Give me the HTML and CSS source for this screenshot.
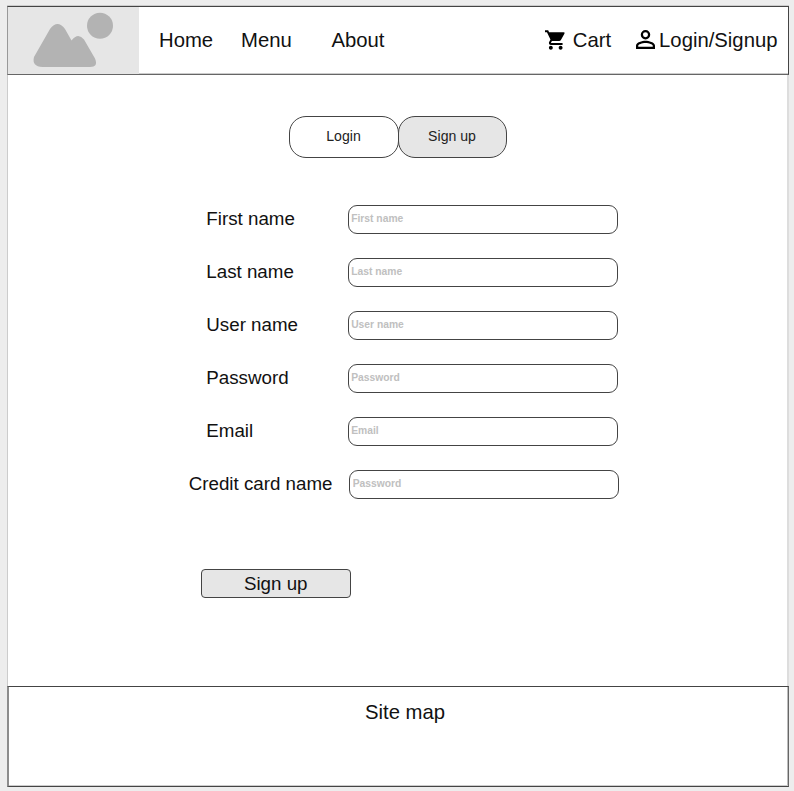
FILE: index.html
```
<!DOCTYPE html>
<html lang="en">
<head>
<meta charset="utf-8">
<title>Sign up</title>
<link rel="stylesheet" href="styles.css">
</head>
<body>
<div class="page">
  <header class="header">
    <div class="logo">
      <svg width="131" height="67" viewBox="0 0 131 67" fill="#b3b3b3">
        <circle cx="92" cy="18.8" r="13"/>
        <path d="M42 22Q49.500 12 57 22L63.500 33.500Q70 25 76 32.500L87 51.500Q90.500 60 82 60H34.500Q23.500 59.500 26 50Z"/>
      </svg>
    </div>
    <nav class="nav">
      <a class="home">Home</a>
      <a class="menu">Menu</a>
      <a>About</a>
    </nav>
    <div class="actions">
      <a class="cart"><svg width="20" height="20" viewBox="1 2 20.5 20"><path d="M7 18c-1.1 0-1.990.9-1.990 2S5.900 22 7 22s2-.9 2-2-.9-2-2-2zM1 2v2h2l3.600 7.590-1.350 2.450c-.16.28-.25.61-.25.960 0 1.100.9 2 2 2h12v-2H7.420c-.14 0-.25-.11-.25-.25l.03-.12.9-1.630h7.450c.75 0 1.410-.41 1.750-1.030l3.580-6.490A1 1 0 0 0 20.010 4H5.210l-.94-2H1zm16 16c-1.100 0-1.990.9-1.990 2s.89 2 1.990 2 2-.9 2-2-.9-2-2-2z"/></svg><span>Cart</span></a>
      <a class="account"><svg width="19" height="19" viewBox="4 4 16 16"><path d="M12 5.900a2.100 2.100 0 1 1 0 4.200 2.100 2.100 0 0 1 0-4.200m0 9c2.970 0 6.100 1.460 6.100 2.100v1.100H5.900V17c0-.64 3.130-2.100 6.100-2.100M12 4a4 4 0 1 0 0 8 4 4 0 0 0 0-8zm0 9c-2.670 0-8 1.340-8 4v3h16v-3c0-2.660-5.330-4-8-4z"/></svg><span>Login/Signup</span></a>
    </div>
  </header>
  <main class="main">
    <div class="tabs">
      <button class="tab">Login</button>
      <button class="tab active">Sign up</button>
    </div>
    <form class="form">
      <div class="row"><label for="first">First name</label><input id="first" placeholder="First name"></div>
      <div class="row"><label for="last">Last name</label><input id="last" placeholder="Last name"></div>
      <div class="row"><label for="user">User name</label><input id="user" placeholder="User name"></div>
      <div class="row"><label for="pass">Password</label><input id="pass" placeholder="Password"></div>
      <div class="row"><label for="email">Email</label><input id="email" placeholder="Email"></div>
      <div class="row wide"><label for="card">Credit card name</label><input id="card" placeholder="Password"></div>
      <button type="button" class="submit">Sign up</button>
    </form>
  </main>
  <footer class="footer">Site map</footer>
</div>
</body>
</html>
```
FILE: styles.css
```
* { box-sizing: border-box; }
body {
  margin: 0;
  padding: 6px 5px 4px 7px;
  background: #ededed;
  color: #111;
  font-family: "Liberation Sans", Arial, sans-serif;
}
.page {
  display: flex;
  flex-direction: column;
  width: 782px;
  height: 781px;
  background: #fff;
}
.header {
  display: flex;
  align-items: center;
  flex: none;
  height: 69px;
  border: 1px solid #444;
  border-left-color: #999;
  border-bottom-color: #666;
  font-size: 20.3px;
  box-shadow: 0 -1px #ccc, inset 0 -1px #ccc;
}
.logo {
  width: 131px;
  height: 67px;
  background: #e6e6e6;
}
.logo svg, .actions svg { display: block; }
.nav { display: flex; margin-left: 20px; }
.home { width: 82px; }
.menu { width: 90.500px; }
.actions { display: flex; margin-left: auto; padding-right: 10.500px; }
.actions a { display: flex; align-items: center; }
.actions svg { margin-bottom: 2px; }
.cart { gap: 7.500px; margin-right: 24.500px; }
.account { gap: 4.500px; }
.main {
  flex: 1;
  border-left: 1px solid #ccc;
  border-right: 2px solid #ddd;
}
.tabs { display: flex; margin: 41px 0 0 280.500px; }
.tab {
  width: 110px;
  height: 42px;
  padding: 0 0 2px;
  border: 1px solid #444;
  border-radius: 17px;
  background: #fff;
  color: #222;
  font: 14.100px "Liberation Sans", Arial, sans-serif;
}
.tab.active { width: 109px; margin-left: -1px; background: #e6e6e6; }
.form {
  display: flex;
  flex-direction: column;
  align-items: flex-start;
  gap: 24.070px;
  padding-top: 47px;
}
.row {
  display: flex;
  align-items: center;
  height: 29px;
  margin-left: 198.300px;
  font-size: 18.750px;
}
.row label { width: 141.400px; padding-bottom: 2px; white-space: nowrap; }
.row input {
  width: 270px;
  height: 29px;
  padding: 0 3px 2px 2.500px;
  border: 1px solid #444;
  border-radius: 9px;
  background: #fff;
  font: bold 10.300px "Liberation Sans", Arial, sans-serif;
}
.row input::placeholder { color: #c0c0c0; opacity: 1; }
.row.wide { margin-left: 180.700px; }
.row.wide label { width: 160.500px; }
.submit {
  width: 149.500px;
  height: 29px;
  margin: 45.500px 0 0 193px;
  padding: 1px 0 0;
  border: 1px solid #444;
  border-radius: 4px;
  background: #e6e6e6;
  color: #111;
  font: 18.750px "Liberation Sans", Arial, sans-serif;
}
.footer {
  flex: none;
  height: 101px;
  padding: 13px 0 0 13px;
  border: 1px solid #444;
  border-left: 2px solid #8c8c8c;
  border-right-color: #666;
  box-shadow: inset 0 -1px #ccc, inset -1px 0 #bbb;
  font-size: 20.300px;
  line-height: 24px;
  text-align: center;
}
```
